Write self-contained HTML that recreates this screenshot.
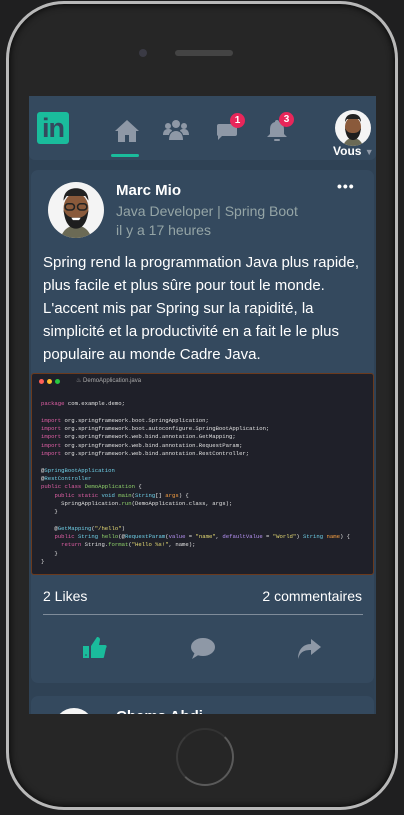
<!DOCTYPE html>
<html><head><meta charset="utf-8"><style>
*{margin:0;padding:0;box-sizing:border-box}
body{width:404px;height:815px;background:#1f1f20;position:relative;overflow:hidden;font-family:"Liberation Sans",sans-serif}
.phone{position:absolute;left:6px;top:1px;width:392px;height:809px;border-radius:58px;border:3px solid #b8b8b8;background:#262626;box-shadow:inset 0 0 8px #000}
.screen{position:absolute;left:29px;top:96px;width:347px;height:618px;background:#2f4255;overflow:hidden}
.nav{position:absolute;left:0;top:0;width:347px;height:64px;background:#34495e;border-radius:0 0 6px 6px}
.card{position:absolute;left:2px;width:343px;background:#34495e;border-radius:7px}
.badge{position:absolute;width:15px;height:15px;border-radius:50%;background:#e8265a;color:#fff;font-size:10px;font-weight:bold;text-align:center;line-height:15px}
.av{position:absolute;border-radius:50%;background:#f4f4f4;overflow:hidden}
.code{position:absolute;left:2px;top:277px;width:343px;height:202px;background:#1f2029;border:1px solid #6b3a1d;border-radius:3px;font-family:"Liberation Mono",monospace;font-size:5.6px;color:#e0e0e0;line-height:8.3px;padding:0 0 0 9px;white-space:pre}
.k{color:#e05fa5}.t{color:#6fd0e8}.y{color:#e6db74}.o{color:#f59e42}.g{color:#8fd16a}.p{color:#b591f2}
</style></head><body>
<div class="phone">
<div style="position:absolute;left:130px;top:45px;width:8px;height:8px;border-radius:50%;background:#3a3a44"></div>
<div style="position:absolute;left:166px;top:46px;width:58px;height:6px;border-radius:3px;background:#444"></div>
<div style="position:absolute;left:167px;top:724px;width:58px;height:58px;border-radius:50%;border:2px solid #5a5a5a;border-top-color:#333;border-left-color:#3a3a3a"></div>
</div>
<div class="screen">
<div class="nav">
 <div style="position:absolute;left:8px;top:16px;width:32px;height:32px;background:#1abc9c;border-radius:3px;color:#34495e;font-weight:bold;font-size:27px;line-height:32px;text-align:center;letter-spacing:-1px">in</div>
 <svg style="position:absolute;left:86px;top:24px" width="24" height="22" viewBox="0 0 24 22"><path d="M12 0L0 11h3v11h7v-7h4v7h7V11h3z" fill="#8e98a6"/></svg>
 <div style="position:absolute;left:82px;top:58px;width:28px;height:3px;border-radius:2px;background:#1abc9c"></div>
 <svg style="position:absolute;left:134px;top:24px" width="26" height="20" viewBox="0 0 26 20" fill="#8e98a6"><circle cx="13" cy="4" r="4"/><circle cx="5" cy="6" r="3"/><circle cx="21" cy="6" r="3"/><path d="M6 20c0-6 3-9 7-9s7 3 7 9z"/><path d="M0 15c0-4 2-6 5-6s4 1 4 2c-2 1-3 3-3 4z"/><path d="M26 15c0-4-2-6-5-6s-4 1-4 2c2 1 3 3 3 4z"/></svg>
 <svg style="position:absolute;left:187px;top:25px" width="22" height="22" viewBox="0 0 22 22" fill="#8e98a6"><path d="M5 3h14a2 2 0 012 2v8a2 2 0 01-2 2H6l-4 4v-4a2 2 0 01-1-2V5a2 2 0 012-2z"/></svg>
 <div class="badge" style="left:201px;top:17px">1</div>
 <svg style="position:absolute;left:238px;top:24px" width="20" height="22" viewBox="0 0 20 22" fill="#8e98a6"><path d="M10 0a2 2 0 012 2c4 1 5 4 5 8v4l3 3H0l3-3v-4c0-4 1-7 5-8a2 2 0 012-2z"/><rect x="7" y="19" width="6" height="2" rx="1"/></svg>
 <div class="badge" style="left:250px;top:16px">3</div>
 <div class="av" style="left:306px;top:14px;width:36px;height:36px"><svg width="36" height="36" viewBox="0 0 36 36"><path d="M8 36c2-6 6-8 10-8s8 2 10 8z" fill="#6b6a55"/><ellipse cx="18" cy="17" rx="8" ry="10" fill="#8a5a3b"/><path d="M10 12c0-6 4-8 8-8s8 2 8 8l-2-3H12z" fill="#222"/><path d="M10 18c1 10 5 12 8 12s7-2 8-12c-2 4-4 5-8 5s-6-1-8-5z" fill="#1e1e1e"/></svg></div>
 <div style="position:absolute;left:304px;top:48px;color:#fff;font-size:12px;font-weight:bold">Vous <span style="color:#8e98a6;font-size:9px">▼</span></div>
</div>

<div class="card" style="top:74px;height:513px">
 <div class="av" style="left:17px;top:12px;width:56px;height:56px"><svg width="56" height="56" viewBox="0 0 36 36"><path d="M8 36c2-6 6-8 10-8s8 2 10 8z" fill="#6b6a55"/><ellipse cx="18" cy="17" rx="8" ry="10" fill="#8a5a3b"/><path d="M10 12c0-6 4-8 8-8s8 2 8 8l-2-3H12z" fill="#222"/><rect x="11" y="14" width="6" height="4" rx="2" fill="none" stroke="#222" stroke-width="1"/><rect x="19" y="14" width="6" height="4" rx="2" fill="none" stroke="#222" stroke-width="1"/><path d="M10 18c1 10 5 12 8 12s7-2 8-12c-2 4-4 5-8 5s-6-1-8-5z" fill="#1e1e1e"/><path d="M15 23h6l-1 1.5h-4z" fill="#fff"/></svg></div>
 <div style="position:absolute;left:85px;top:12px;color:#fff;font-weight:bold;font-size:15px">Marc Mio</div>
 <div style="position:absolute;left:85px;top:33px;color:#95a5a6;font-size:14px">Java Developer | Spring Boot</div>
 <div style="position:absolute;left:85px;top:52px;color:#95a5a6;font-size:14px">il y a 17 heures</div>
 <div style="position:absolute;left:306px;top:8px;color:#fff;font-size:14px;font-weight:bold;letter-spacing:1px">•••</div>
 <div style="position:absolute;left:12px;top:81px;width:330px;color:#fff;font-size:15px;line-height:23px">Spring rend la programmation Java plus rapide, plus facile et plus sûre pour tout le monde. L'accent mis par Spring sur la rapidité, la simplicité et la productivité en a fait le le plus populaire au monde Cadre Java.</div>
</div>
<div class="code" style="top:277px;left:2px"><div style="position:absolute;left:7px;top:5px;width:5px;height:5px;border-radius:50%;background:#ff5f57"></div><div style="position:absolute;left:15px;top:5px;width:5px;height:5px;border-radius:50%;background:#febc2e"></div><div style="position:absolute;left:23px;top:5px;width:5px;height:5px;border-radius:50%;background:#28c840"></div><div style="position:absolute;left:44px;top:3px;font-family:'Liberation Sans';font-size:6px;color:#aaa">♨ DemoApplication.java</div>
<div style="padding-top:18px"><span class="k">package</span> com.example.demo;

<span class="k">import</span> org.springframework.boot.SpringApplication;
<span class="k">import</span> org.springframework.boot.autoconfigure.SpringBootApplication;
<span class="k">import</span> org.springframework.web.bind.annotation.GetMapping;
<span class="k">import</span> org.springframework.web.bind.annotation.RequestParam;
<span class="k">import</span> org.springframework.web.bind.annotation.RestController;

@<span class="t">SpringBootApplication</span>
@<span class="t">RestController</span>
<span class="k">public class</span> <span class="g">DemoApplication</span> {
    <span class="k">public static</span> <span class="t">void</span> <span class="g">main</span>(<span class="t">String</span>[] <span class="o">args</span>) {
      SpringApplication.<span class="g">run</span>(DemoApplication.class, args);
    }

    @<span class="t">GetMapping</span>(<span class="y">"/hello"</span>)
    <span class="k">public</span> <span class="t">String</span> <span class="g">hello</span>(@<span class="t">RequestParam</span>(<span class="p">value</span> = <span class="y">"name"</span>, <span class="p">defaultValue</span> = <span class="y">"World"</span>) <span class="t">String</span> <span class="o">name</span>) {
      <span class="k">return</span> String.<span class="g">format</span>(<span class="y">"Hello %s!"</span>, name);
    }
}</div></div>
<div style="position:absolute;left:14px;top:492px;color:#fff;font-size:14px">2 Likes</div>
<div style="position:absolute;right:14px;top:492px;color:#fff;font-size:14px">2 commentaires</div>
<div style="position:absolute;left:14px;top:518px;width:320px;height:1px;background:#7f8c9a"></div>
<svg style="position:absolute;left:54px;top:540px" width="24" height="22" viewBox="0 0 24 22"><rect x="0" y="10" width="6" height="12" fill="#1abc9c"/><path d="M8 10l6-9c2 0 3 1 3 3l-1 5h6c2 0 2 2 1 3l-2 9c0 1-1 1-2 1H8z" fill="#1abc9c"/><circle cx="3" cy="19" r="0.8" fill="#34495e"/></svg>
<svg style="position:absolute;left:162px;top:542px" width="24" height="22" viewBox="0 0 24 22"><ellipse cx="12" cy="9" rx="12" ry="9" fill="#8e98a6"/><path d="M4 14l-3 7 8-5z" fill="#8e98a6"/></svg>
<svg style="position:absolute;left:268px;top:543px" width="24" height="20" viewBox="0 0 24 20"><path d="M14 0l10 8-10 8v-5C7 11 3 13 1 20 1 11 6 5 14 5z" fill="#8e98a6"/></svg>

<div class="card" style="top:600px;height:40px">
 <div class="av" style="left:23px;top:12px;width:40px;height:40px"></div>
 <div style="position:absolute;left:85px;top:12px;color:#fff;font-weight:bold;font-size:15px">Chems Abdi</div>
</div>
</div>
</body></html>
